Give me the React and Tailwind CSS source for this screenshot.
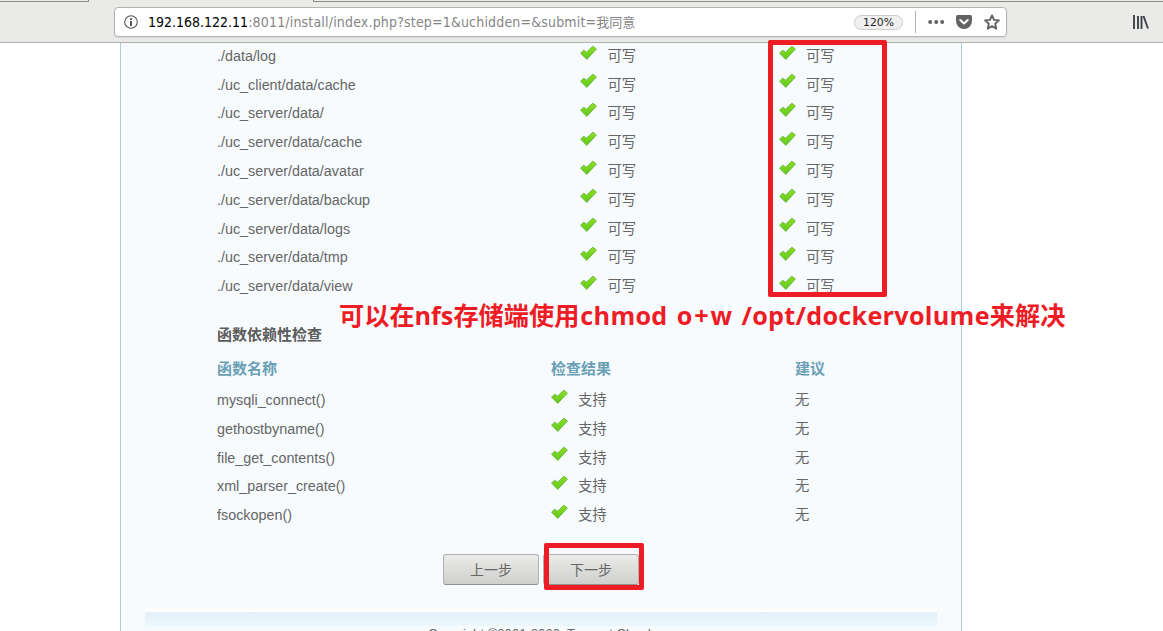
const directories = [
  './data/log',
  './uc_client/data/cache',
  './uc_server/data/',
  './uc_server/data/cache',
  './uc_server/data/avatar',
  './uc_server/data/backup',
  './uc_server/data/logs',
  './uc_server/data/tmp',
  './uc_server/data/view',
];

const functions = [
  'mysqli_connect()',
  'gethostbyname()',
  'file_get_contents()',
  'xml_parser_create()',
  'fsockopen()',
];

function Check() {
  return (
    <svg width="18" height="16" viewBox="0 0 18 16" className="-mt-[8px] shrink-0">
      <defs>
        <linearGradient id="tick" x1="0" y1="0" x2="0" y2="1">
          <stop offset="0" stopColor="#8fe01c" />
          <stop offset="1" stopColor="#5fc820" />
        </linearGradient>
      </defs>
      <path
        d="M.6 8.2 3.6 5.200 6.600 7.200 12.800 1.200l3.600 2.800L6.800 14.400z"
        fill="url(#tick)"
        stroke="#6cba45"
        strokeWidth="1"
        strokeLinejoin="round"
      />
    </svg>
  );
}

function Status({ children }) {
  return (
    <div className="flex items-center gap-[9px]">
      <Check />
      <span>{children}</span>
    </div>
  );
}

function Toolbar() {
  return (
    <header className="flex h-[43px] shrink-0 flex-col border-b border-[#b0b1ac] bg-[#eaeae8]">
      <div className="flex h-[2px] shrink-0 justify-between">
        <div className="w-[89px] border-r border-b border-[#8b8c88]" />
        <div className="w-[850px] border-b border-l border-[#8b8c88]" />
      </div>
      <div className="flex pt-[5px]">
        <div className="ml-[114px] flex h-[30px] w-[893px] items-center rounded-[4px] border border-[#b3b3b0] bg-white pr-[6px] pl-[9px] shadow-[0_1px_2px_rgba(0,0,0,0.08)]">
          <svg width="14" height="14" viewBox="0 0 14 14" className="mr-[10px]">
            <circle cx="7" cy="7" r="6.3" fill="none" stroke="#555" strokeWidth="1.1" />
            <path d="M6 3.2h2v1.7H6zM6 6h2v5H6z" fill="#555" />
          </svg>
          <div className="flex-1 whitespace-nowrap font-['DejaVu_Sans_Condensed','DejaVu_Sans','Noto_Sans_CJK_SC',sans-serif] text-[14px] leading-[28px] font-stretch-condensed text-[#858585]">
            <span className="text-black">192.168.122.11</span>
            <span className="tracking-[0.18px]">:8011/install/index.php?step=1&amp;uchidden=&amp;submit=</span>
            <span className="text-[13px]">我同意</span>
          </div>
          <div className="h-[15px] w-[49px] rounded-full border border-[#cbcbcb] bg-[#f0f0f0] text-center font-['DejaVu_Sans',sans-serif] text-[10.8px] leading-[13px] text-[#222]">
            120%
          </div>
          <div className="mr-[12px] ml-[12px] h-[22px] w-px bg-[#b3b3b3]" />
          <svg width="17" height="16" viewBox="0 0 17 16" fill="#636363">
            <circle cx="2.2" cy="8" r="2" />
            <circle cx="8.2" cy="8" r="2" />
            <circle cx="14.2" cy="8" r="2" />
          </svg>
          <svg width="16" height="16" viewBox="0 0 16 16" className="ml-[11px]">
            <path d="M1.8 1h12.4Q16 1 16 2.8V7a8 8 0 0 1-16 0V2.8Q0 1 1.8 1z" fill="#636363" />
            <path d="M4.3 6 8 9.4 11.7 6" fill="none" stroke="#fff" strokeWidth="2" strokeLinecap="round" strokeLinejoin="round" />
          </svg>
          <svg width="16" height="16" viewBox="0 0 16 16" className="ml-[12px]">
            <path
              d="M8 1.4l2 4.5 4.9.5-3.7 3.3 1.1 4.9L8 12.1l-4.3 2.5 1.1-4.9L1.100 6.4 6 5.900z"
              fill="none"
              stroke="#636363"
              strokeWidth="1.9"
              strokeLinejoin="round"
            />
          </svg>
        </div>
        <svg width="16" height="14" viewBox="0 0 16 14" className="mt-[8px] ml-[126px]">
          <path d="M1 0v14M5 1v13M8.500 1v13M10.500 1l4.500 12.500" fill="none" stroke="#3f4448" strokeWidth="1.9" />
        </svg>
      </div>
    </header>
  );
}

function StepButton({ children }) {
  return (
    <button className="h-[31px] w-[96px] rounded-[3px] border border-[#b0b0ae] border-b-[#8f8f8c] bg-linear-to-b from-[#ebebea] to-[#cfcfcd] pt-px text-[14px] leading-[28px] text-[#666]">
      {children}
    </button>
  );
}

export default function App() {
  return (
    <div className="relative flex h-[631px] w-[1163px] flex-col overflow-hidden bg-white font-['Liberation_Sans','Noto_Sans_CJK_SC',sans-serif] text-[14.35px] text-[#666]">
      <Toolbar />
      <main className="ml-[120px] h-[588px] w-[842px] overflow-hidden border-x border-[#b0cdd6] bg-[#f7fbfe] px-6">
        <div className="-mt-[0.9px] pl-[72px]">
          {directories.map((name) => (
            <div key={name} className="grid h-[28.8px] grid-cols-[363.400px_198.600px_1fr] items-center">
              <span>{name}</span>
              <Status>可写</Status>
              <Status>可写</Status>
            </div>
          ))}
          <h2 className="mt-[18.7px] h-[29px] text-[15px] leading-[29px] font-bold text-[#5c5c5c]">函数依赖性检查</h2>
          <div className="mt-[4.8px] grid h-[30px] grid-cols-[334px_244px_1fr] items-center text-[15px] font-bold text-[#6a9fb5]">
            <span>函数名称</span>
            <span>检查结果</span>
            <span>建议</span>
          </div>
          <div className="pt-[2.5px]">
            {functions.map((name) => (
              <div key={name} className="grid h-[28.8px] grid-cols-[334px_244px_1fr] items-center">
                <span>{name}</span>
                <Status>支持</Status>
                <span>无</span>
              </div>
            ))}
          </div>
        </div>
        <div className="mt-[23.7px] flex gap-[4px] pl-[298px]">
          <StepButton>上一步</StepButton>
          <StepButton>下一步</StepButton>
        </div>
        <footer className="mt-[24px] h-[60px] border-t-[3px] border-white">
          <div className="h-[14px] bg-linear-to-b from-[#e4f1fa] to-[#ecf6fc]" />
          <p className="pl-[283px] text-[13.1px] leading-[16px] whitespace-pre">Copyright ©2001-2020, Tencent Cloud.</p>
        </footer>
      </main>

      <div className="absolute top-[40px] left-[768px] h-[257px] w-[119px] rounded-[2px] border-[5px] border-[#ee1c25]" />
      <div className="absolute top-[543px] left-[544px] h-[47px] w-[100px] rounded-[2px] border-[5px] border-[#ee1c25]" />
      <p className="absolute top-[297px] left-[339px] font-['Open_Sans','Noto_Sans_CJK_SC',sans-serif] text-[25.2px] leading-[36px] font-bold whitespace-nowrap text-[#ee1c25]">
        可以在nfs存储端使用
        <span className="ml-px tracking-[0.28px] [word-spacing:2.5px]">
          chmod o<span className="px-[1.5px]">+</span>w /opt/dockervolume
        </span>
        来解决
      </p>
    </div>
  );
}
